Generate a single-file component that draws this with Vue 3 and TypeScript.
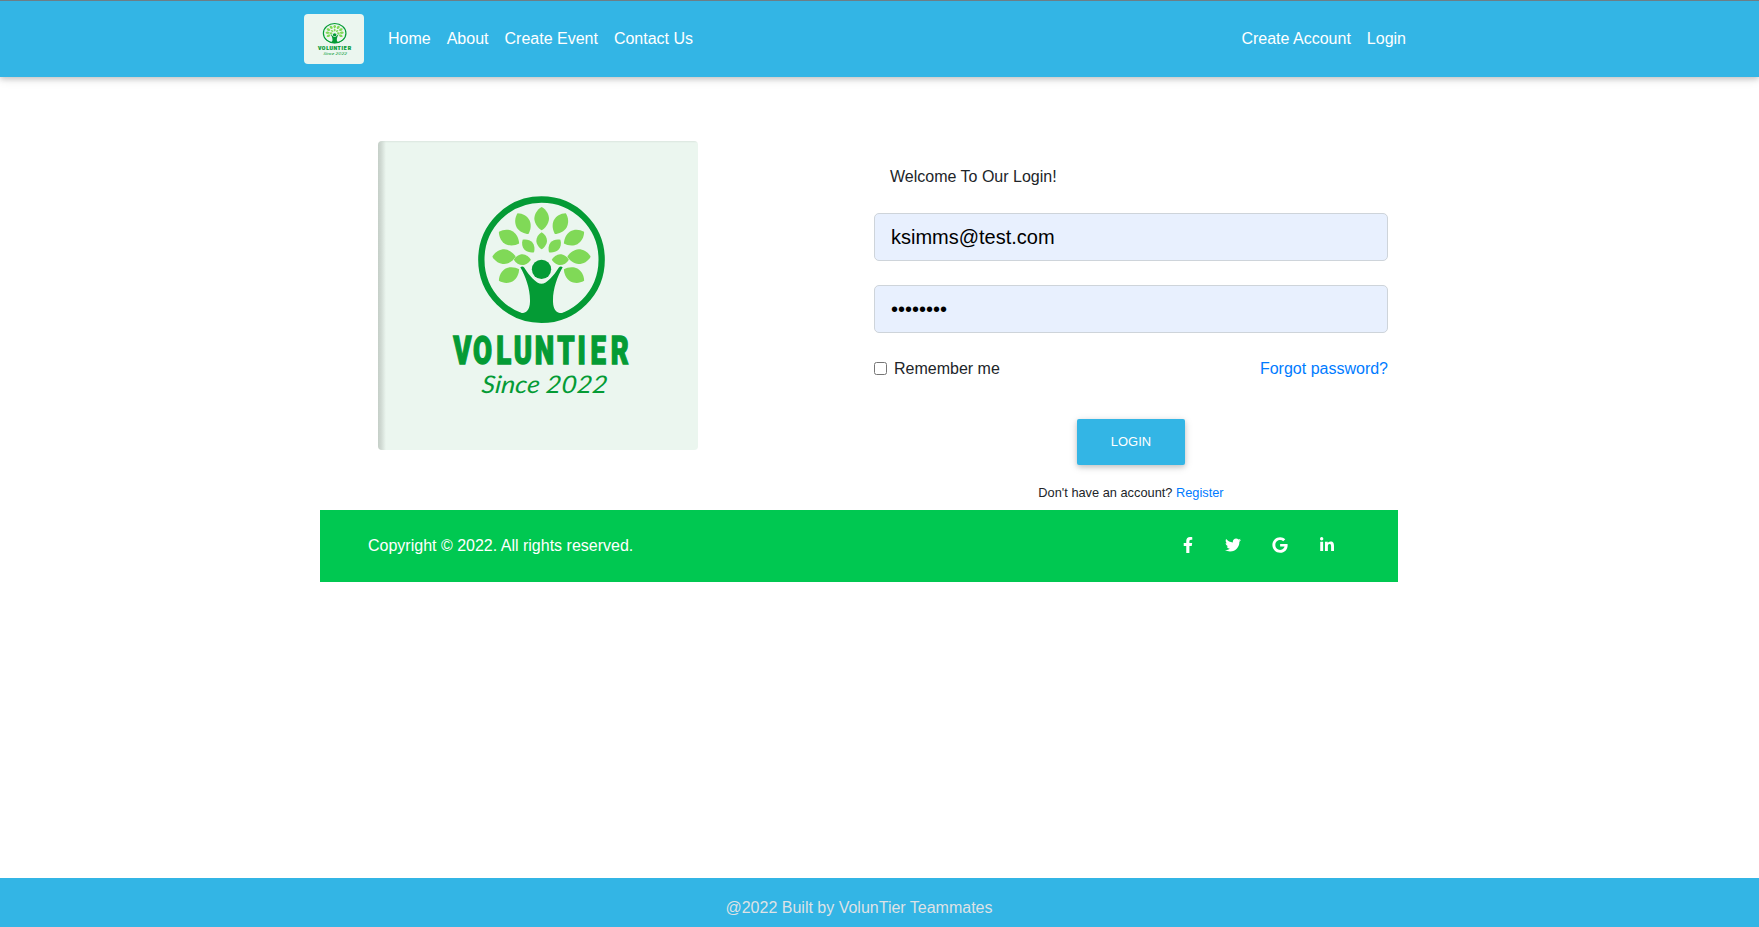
<script setup lang="ts">
import { ref } from 'vue'

interface SocialIcon {
  name: string
  width: number
  viewBox: string
  path: string
}

interface Leaf {
  x: number
  y: number
  angle: number
  scale: number
}

const mainLinks: string[] = ['Home', 'About', 'Create Event', 'Contact Us']
const accountLinks: string[] = ['Create Account', 'Login']

const email = ref('ksimms@test.com')
const password = ref('password')
const remember = ref(false)

const leaves: Leaf[] = [
  { x: 515, y: 266, angle: 0, scale: 1 },
  { x: 459, y: 281, angle: -28, scale: 1 },
  { x: 571, y: 281, angle: 28, scale: 1 },
  { x: 417, y: 323, angle: -60, scale: 1 },
  { x: 612, y: 323, angle: 60, scale: 1 },
  { x: 402, y: 380, angle: -90, scale: 1 },
  { x: 627, y: 380, angle: 90, scale: 1 },
  { x: 417, y: 435, angle: -120, scale: 1 },
  { x: 612, y: 435, angle: 120, scale: 1 },
  { x: 515, y: 332, angle: 0, scale: 0.73 },
  { x: 475, y: 348, angle: -42, scale: 0.73 },
  { x: 554, y: 348, angle: 42, scale: 0.73 },
  { x: 457, y: 389, angle: -90, scale: 0.73 },
  { x: 571, y: 389, angle: 90, scale: 0.73 },
]

const socials: SocialIcon[] = [
  {
    name: 'Facebook',
    width: 10,
    viewBox: '0 0 320 512',
    path: 'M279.14 288l14.22-92.66h-88.91v-60.13c0-25.35 12.42-50.06 52.24-50.06h40.42V6.26S260.43 0 225.36 0c-73.22 0-121.08 44.38-121.08 124.72v70.62H22.89V288h81.39v224h100.17V288z',
  },
  {
    name: 'Twitter',
    width: 16,
    viewBox: '0 0 512 512',
    path: 'M459.37 151.716c.325 4.548.325 9.097.325 13.645 0 138.72-105.583 298.558-298.558 298.558-59.452 0-114.68-17.219-161.137-47.106 8.447.974 16.568 1.299 25.34 1.299 49.055 0 94.213-16.568 130.274-44.832-46.132-.975-84.792-31.188-98.112-72.772 6.498.974 12.995 1.624 19.818 1.624 9.421 0 18.843-1.3 27.614-3.573-48.081-9.747-84.143-51.98-84.143-102.985v-1.299c13.969 7.797 30.214 12.67 47.431 13.319-28.264-18.843-46.781-51.005-46.781-87.391 0-19.492 5.197-37.36 14.294-52.954 51.655 63.675 129.3 105.258 216.365 109.807-1.624-7.797-2.599-15.918-2.599-24.04 0-57.828 46.782-104.934 104.934-104.934 30.213 0 57.502 12.67 76.67 33.137 23.715-4.548 46.456-13.32 66.599-25.34-7.798 24.366-24.366 44.833-46.132 57.827 21.117-2.273 41.584-8.122 60.426-16.243-14.292 20.791-32.161 39.308-52.628 54.253z',
  },
  {
    name: 'Google',
    width: 16,
    viewBox: '0 0 488 512',
    path: 'M488 261.8C488 403.3 391.1 504 248 504 110.8 504 0 393.2 0 256S110.8 8 248 8c66.8 0 123 24.5 166.3 64.9l-67.5 64.9C258.5 52.6 94.3 116.6 94.3 256c0 86.5 69.1 156.6 153.7 156.6 98.2 0 135-70.4 140.8-106.9H248v-85.3h236.1c2.3 12.7 3.9 24.9 3.9 41.4z',
  },
  {
    name: 'LinkedIn',
    width: 14,
    viewBox: '0 0 448 512',
    path: 'M100.28 448H7.4V148.9h92.88zM53.79 108.1C24.09 108.1 0 83.5 0 53.8a53.79 53.79 0 0 1 107.58 0c0 29.7-24.1 54.3-53.79 54.3zM447.9 448h-92.68V302.4c0-34.7-.7-79.2-48.29-79.2-48.29 0-55.69 37.7-55.69 76.7V448h-92.78V148.9h89.08v40.8h1.3c12.4-23.5 42.69-48.3 87.88-48.3 94 0 111.28 61.9 111.28 142.3V448z',
  },
]
</script>

<template>
  <div class="page">
    <header class="topbar">
      <div class="topbar-inner">
        <svg class="nav-logo" viewBox="24 33 960 927" preserveAspectRatio="none"><use href="#brand" /></svg>
        <nav class="links">
          <a v-for="link in mainLinks" :key="link">{{ link }}</a>
        </nav>
        <nav class="links account">
          <a v-for="link in accountLinks" :key="link">{{ link }}</a>
        </nav>
      </div>
    </header>

    <main class="content">
      <section class="login">
        <div class="picture">
          <svg class="picture-art" viewBox="24 33 960 927" preserveAspectRatio="none">
            <g id="brand">
              <g class="leaf">
                <path
                  v-for="(leaf, i) in leaves"
                  :key="i"
                  d="M0-35C14-27 22-13 22 1C21 16 10 29 0 35C-10 29-21 16-22 1C-22-13-14-27 0-35Z"
                  :transform="`translate(${leaf.x} ${leaf.y}) rotate(${leaf.angle}) scale(${leaf.scale})`"
                />
              </g>
              <g class="trunk">
                <circle class="ring" cx="514.5" cy="389" r="180.5" />
                <circle cx="514.5" cy="418" r="29" />
                <path
                  d="M451 412Q457 406 463 413C478 437 499 461 514.5 461C530 461 551 437 566 413Q572 406 578 412C562 440 548 478 549 515C550 540 560 549 575 549C600 549 630 525 655 502L655 510A186 186 0 0 1 374 510L374 502C399 525 429 549 454 549C469 549 479 540 480 515C481 478 467 440 451 412Z"
                />
              </g>
              <text class="brand-name" transform="translate(0 703) scale(0.72 1)" x="384.5 469 557 637 727 816 882 951 1041">VOLUNTIER</text>
              <text class="brand-since" transform="translate(333 789) skewX(-6)" textLength="378" lengthAdjust="spacingAndGlyphs">Since 2022</text>
            </g>
          </svg>
        </div>
        <form class="form" @submit.prevent>
          <p class="welcome">Welcome To Our Login!</p>
          <input v-model="email" class="field" type="email" aria-label="Email" />
          <input v-model="password" class="field" type="password" aria-label="Password" />
          <div class="options">
            <label class="remember"><input v-model="remember" type="checkbox" />Remember me</label>
            <a class="link">Forgot password?</a>
          </div>
          <button class="submit" type="submit">LOGIN</button>
          <p class="register">Don't have an account? <a class="link">Register</a></p>
        </form>
      </section>
      <section class="copyright">
        <span>Copyright © 2022. All rights reserved.</span>
        <div class="socials">
          <svg
            v-for="icon in socials"
            :key="icon.name"
            :width="icon.width"
            height="16"
            :viewBox="icon.viewBox"
            :aria-label="icon.name"
          >
            <path :d="icon.path" />
          </svg>
        </div>
      </section>
    </main>

    <footer class="footer">@2022 Built by VolunTier Teammates</footer>
  </div>
</template>

<style>
body {
  margin: 0;
  overflow: hidden;
}
</style>

<style scoped>
* {
  box-sizing: border-box;
}

.page {
  display: flex;
  flex-direction: column;
  height: 927px;
  background: #fff;
  color: #212529;
  font: 16px/24px "Liberation Sans", Arial, sans-serif;
}

.leaf {
  fill: #80d957;
}

.trunk {
  fill: #049b35;
}

.ring {
  fill: none;
  stroke: #049b35;
  stroke-width: 19;
}

.brand-name {
  fill: #049b35;
  stroke: #049b35;
  stroke-width: 4;
  font: 900 115px Roboto, sans-serif;
  text-anchor: middle;
}

.brand-since {
  fill: #049b35;
  font: italic 400 73px Lato, "Open Sans", sans-serif;
}

.topbar {
  flex: none;
  height: 77px;
  border-top: 1px solid #6c7e86;
  background: #33b5e5;
  box-shadow: 0 2px 5px rgba(0, 0, 0, 0.16), 0 2px 10px rgba(0, 0, 0, 0.12);
}

.topbar-inner {
  display: flex;
  width: 1102px;
  margin-left: 304px;
  padding-top: 13px;
}

.nav-logo {
  width: 60px;
  height: 50px;
  margin-right: 24px;
  border-radius: 4px;
  background: #ebf6ef;
}

.links {
  display: flex;
  gap: 16px;
  height: 50px;
  padding-top: 13px;
  color: #fff;
}

.account {
  margin-left: auto;
}

.content {
  flex: 1;
  width: 1078px;
  margin-left: 320px;
}

.login {
  display: flex;
  height: 433px;
}

.picture {
  width: 320px;
  height: 309px;
  margin: 64px 176px 0 58px;
  border-radius: 4px;
  overflow: hidden;
  background: linear-gradient(90deg, #c5cfc8 0, #cfd9d2 3px, rgba(235, 246, 239, 0) 8px),
    linear-gradient(#dbe6df 0, rgba(235, 246, 239, 0) 2px), #ebf6ef;
}

.picture-art {
  display: block;
  width: 320px;
  height: 309px;
}

.form {
  display: flex;
  flex-direction: column;
  width: 514px;
  padding-top: 88px;
}

.welcome {
  margin: 0 0 24px 16px;
}

.field {
  flex: none;
  width: 514px;
  height: 48px;
  margin: 0 0 24px;
  padding: 8px 16px;
  border: 1px solid #ced4da;
  border-radius: 5px;
  outline: none;
  background: #e8f0fe;
  color: #000;
  font: 20px/30px "Liberation Sans", Arial, sans-serif;
}

.options {
  display: flex;
  justify-content: space-between;
  height: 24px;
  margin-bottom: 38px;
}

.remember {
  display: flex;
  align-items: center;
}

.remember input {
  width: 13px;
  height: 13px;
  margin: 0 7px 2px 0;
}

.link {
  color: #007bff;
}

.submit {
  flex: none;
  align-self: center;
  width: 108px;
  height: 46px;
  padding: 0;
  border: 0;
  border-radius: 2px;
  background: #33b5e5;
  box-shadow: 0 2px 5px rgba(0, 0, 0, 0.16), 0 2px 10px rgba(0, 0, 0, 0.12);
  color: #fff;
  font: 12.96px/20px "Liberation Sans", Arial, sans-serif;
}

.register {
  margin: 18px 0 0;
  text-align: center;
  font-size: 12.8px;
  line-height: 20px;
}

.copyright {
  display: flex;
  align-items: flex-start;
  justify-content: space-between;
  height: 72px;
  padding: 24px 64px 0 48px;
  background: #00c851;
  color: #fff;
}

.socials {
  display: flex;
  gap: 31.7px;
  padding-top: 3px;
}

.socials path {
  fill: #fff;
}

.footer {
  flex: none;
  height: 49px;
  padding: 18px 41px 0 0;
  background: #33b5e5;
  color: #dee2e6;
  text-align: center;
}
</style>
